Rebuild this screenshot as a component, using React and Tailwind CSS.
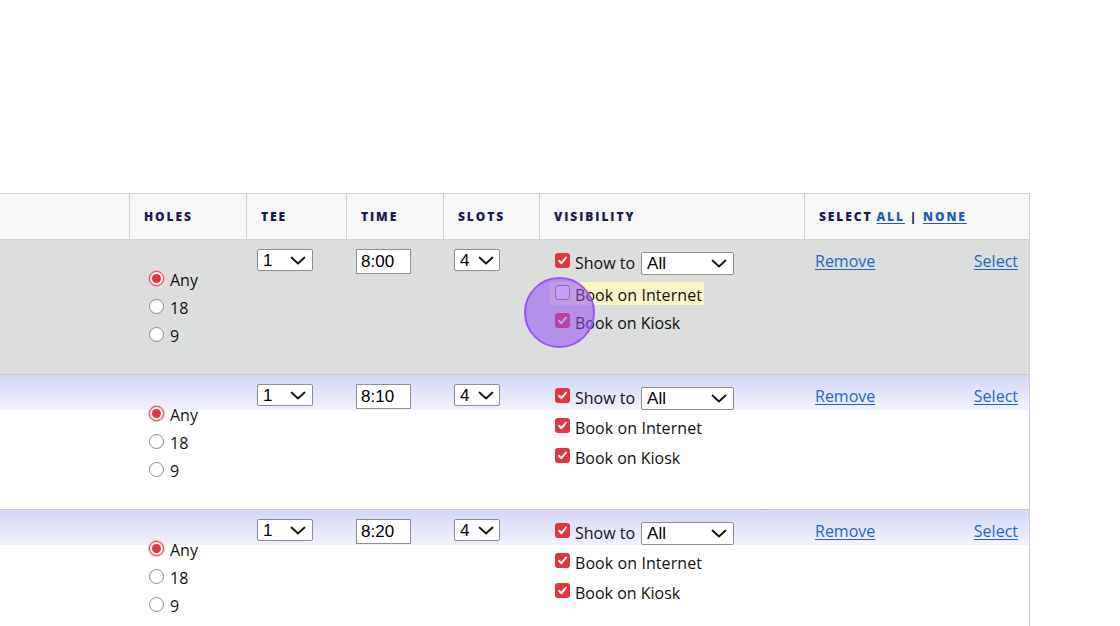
import React from "react";

const COLS = "grid grid-cols-[129px_117px_100px_97px_96px_265px_224px]";

function Chevron({ w = 16 }) {
  return (
    <svg width={w} height="9" viewBox="0 0 16 9" fill="none">
      <path d="M1.5 1.5 L8 7.5 L14.5 1.5" stroke="#111" strokeWidth="1.8" strokeLinecap="round" strokeLinejoin="round" />
    </svg>
  );
}

function FakeSelect({ value, width, pad }) {
  return (
    <div
      className="flex h-[22px] items-center justify-between border border-[#8f8f8f] bg-white pl-[5px] font-['Liberation_Sans',Arial,sans-serif] text-[17px] leading-none text-black rounded-[2px]"
      style={{ width, paddingRight: pad }}
    >
      <span>{value}</span>
      <Chevron />
    </div>
  );
}

function Check({ checked = true }) {
  if (!checked)
    return <span className="mb-[6px] block h-[15px] w-[15px] shrink-0 rounded-[3px] border border-[#8a8a8a] bg-white" />;
  return (
    <span className="mb-[6px] flex h-[15px] w-[15px] shrink-0 items-center justify-center rounded-[3px] bg-[#e0363f]">
      <svg width="11" height="11" viewBox="0 0 11 11" fill="none">
        <path d="M2 5.8 L4.4 8.2 L9 2.6" stroke="#fff" strokeWidth="2" strokeLinecap="round" strokeLinejoin="round" />
      </svg>
    </span>
  );
}

function Radio({ checked }) {
  if (checked)
    return (
      <span className="flex h-[15px] w-[15px] shrink-0 items-center justify-center rounded-full border-[1.5px] border-[#e0363f] bg-white shadow-[0_0_0_1px_#f3b9bc]">
        <span className="block h-[9px] w-[9px] rounded-full bg-[#e0363f]" />
      </span>
    );
  return <span className="block h-[15px] w-[15px] shrink-0 rounded-full border border-[#8a8a8a] bg-white" />;
}

function Row({ time, variant }) {
  const rowBg =
    variant === "gray"
      ? "bg-[#dcdddd]"
      : "bg-[linear-gradient(to_bottom,#d2d6f6_0px,#f1f2fc_35px,#ffffff_35px)]";
  const internetChecked = variant !== "gray";
  return (
    <div className={`${COLS} h-[135px] border-b border-[#c8c8c8] ${rowBg}`}>
      <div />
      <div className="flex flex-col justify-center pb-[2px] pl-[20px]">
        {[
          ["Any", true],
          ["18", false],
          ["9", false],
        ].map(([l, c]) => (
          <div key={l} className="flex h-[28px] items-center gap-[6px]">
            <Radio checked={c} />
            <span className="pt-[3px]">{l}</span>
          </div>
        ))}
      </div>
      <div className="pl-[11px] pt-[9px]">
        <FakeSelect value="1" width={56} pad={6} />
      </div>
      <div className="pl-[10px] pt-[9px]">
        <div className="flex h-[25px] w-[55px] items-center border border-[#8f8f8f] bg-white pl-[4px] font-['Liberation_Sans',Arial,sans-serif] text-[17px] leading-none text-black">
          {time}
        </div>
      </div>
      <div className="pl-[11px] pt-[9px]">
        <FakeSelect value="4" width={46} pad={5} />
      </div>
      <div className="relative pl-[16px] pt-[8px]">
        <div className="flex h-[30px] items-center">
          <Check />
          <span className="ml-[5px]">Show to</span>
          <div className="ml-[6px]">
            <div className="flex h-[23px] w-[93px] items-center justify-between rounded-[2px] border border-[#8f8f8f] bg-white pl-[5px] pr-[6px] font-['Liberation_Sans',Arial,sans-serif] text-[17px] leading-none text-black">
              <span>All</span>
              <Chevron />
            </div>
          </div>
        </div>
        <div className="flex h-[30px] items-center">
          {variant === "gray" ? (
            <div className="-ml-[5px] flex h-[23px] items-center bg-[#fcf6c6] pl-[5px] pr-[2px]">
              <span className="mt-[-2px] block h-[15px] w-[15px] shrink-0 rounded-[3px] border border-[#8a8a8a] bg-white" />
              <span className="ml-[5px] pt-[3px] tracking-[0.005em]">Book on Internet</span>
            </div>
          ) : (
            <>
              <Check checked={internetChecked} />
              <span className="ml-[5px] tracking-[0.005em]">Book on Internet</span>
            </>
          )}
        </div>
        <div className="flex h-[30px] items-center">
          <Check />
          <span className="ml-[5px]">Book on Kiosk</span>
        </div>
        {variant === "gray" && (
          <div className="pointer-events-none absolute left-[-15px] top-[37px] h-[71px] w-[71px] rounded-full border-2 border-[#9a55f3] bg-[rgba(150,80,245,0.55)]" />
        )}
      </div>
      <div className="flex justify-between pl-[11px] pr-[10px] pt-[6px]">
        <a className="h-[30px] leading-[30px] text-[#2566c4] underline underline-offset-2">Remove</a>
        <a className="h-[30px] leading-[30px] text-[#2566c4] underline underline-offset-2">Select</a>
      </div>
    </div>
  );
}

export default function App() {
  const th = "border-l border-[#d2d2d2] pl-[14px] flex items-center";
  return (
    <div className="h-[626px] w-[1120px] overflow-hidden bg-white font-['Open_Sans',sans-serif] text-[16px] text-[#111]">
      <div className="pt-[193px]">
        <div className="w-[1030px] border-r border-[#cfcfcf]">
          <div className={`${COLS} h-[47px] border-y border-[#d2d2d2] bg-[#f7f7f7] text-[12px] font-extrabold tracking-[0.16em] text-[#1b1a4c]`}>
            <div />
            <div className={th}>HOLES</div>
            <div className={th}>TEE</div>
            <div className={th}>TIME</div>
            <div className={th}>SLOTS</div>
            <div className={th}>VISIBILITY</div>
            <div className={th}>
              SELECT
              <a className="ml-[4px] text-[#1f5bc0] underline underline-offset-2">ALL</a>
              <span className="mx-[5px]">|</span>
              <a className="text-[#1f5bc0] underline underline-offset-2">NONE</a>
            </div>
          </div>
          <Row time="8:00" variant="gray" />
          <Row time="8:10" variant="blue" />
          <Row time="8:20" variant="blue" />
        </div>
      </div>
    </div>
  );
}
